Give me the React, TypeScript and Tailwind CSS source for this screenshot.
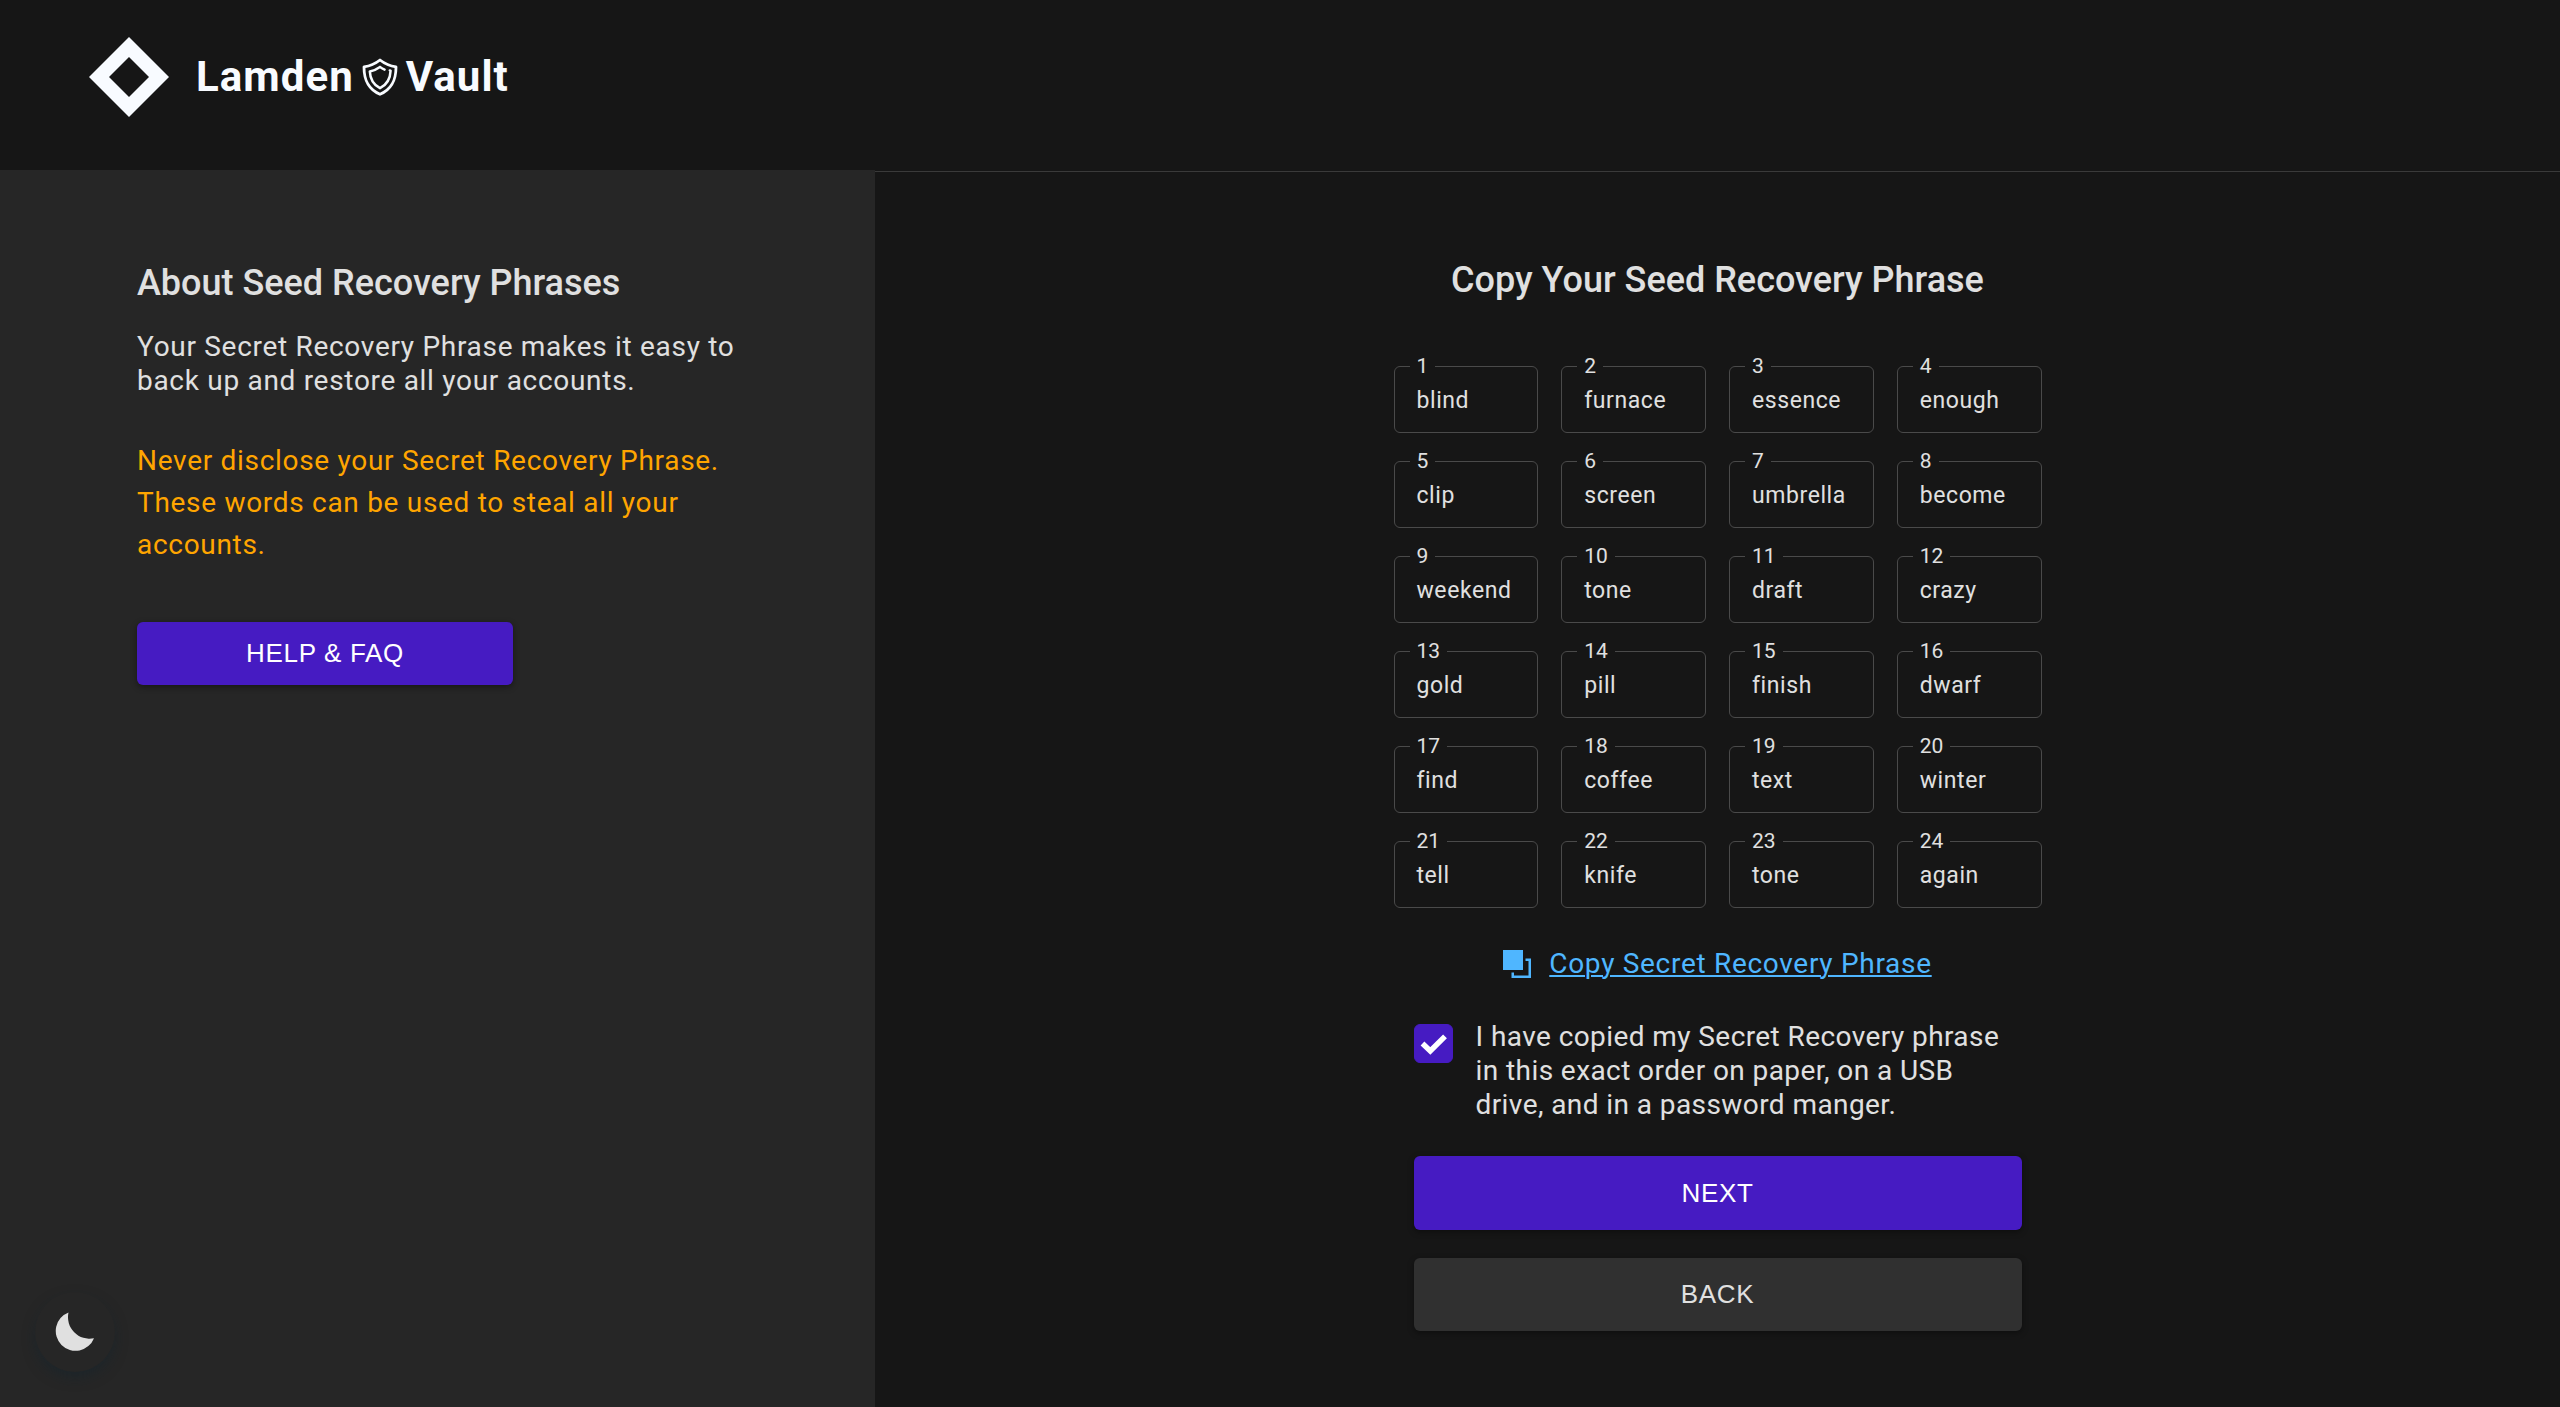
import { useState } from "react";

const WORDS = [
  "blind", "furnace", "essence", "enough",
  "clip", "screen", "umbrella", "become",
  "weekend", "tone", "draft", "crazy",
  "gold", "pill", "finish", "dwarf",
  "find", "coffee", "text", "winter",
  "tell", "knife", "tone", "again",
];

const BUTTON =
  "rounded-md font-['Liberation_Sans',sans-serif] text-[26px] tracking-wide uppercase shadow-[0_2px_6px_rgba(0,0,0,0.4)]";

function Header() {
  return (
    <header className="flex h-[170px] items-start px-[89px] pt-[37px] text-[#f8fbff]">
      <a href="#home" className="flex items-center" aria-label="Lamden Vault">
        <svg viewBox="0 0 80 80" className="size-20" fill="currentColor" aria-hidden="true">
          <path fillRule="evenodd" d="M40 0 80 40 40 80 0 40ZM40 20 20 40 40 60 60 40Z" />
        </svg>
        <span className="ml-[27px] text-[42px] leading-none font-bold tracking-wide">Lamden</span>
        <svg
          viewBox="0 0 36 38"
          className="mx-2 h-[38px] w-9"
          fill="none"
          stroke="currentColor"
          strokeLinecap="round"
          strokeLinejoin="round"
          aria-hidden="true"
        >
          <path
            strokeWidth="2.8"
            d="M18 2C13.200 5.800 8 8 2 8.900 2 22 6 31 18 36.300 30 31 34 22 34 8.900 28 8 22.800 5.800 18 2Z"
          />
          <path
            strokeWidth="2.5"
            d="M22.600 11.600C20.800 10.800 19.400 9.900 18 8.900 14.800 11.200 11.600 12.700 7.800 13.400 8.200 21.800 11.300 26.800 18 30.200 24.700 26.800 28.300 21 28.600 12.600L27.800 12.400"
          />
        </svg>
        <span className="text-[42px] leading-none font-bold tracking-wide">Vault</span>
      </a>
    </header>
  );
}

function InfoPanel() {
  return (
    <aside className="flex w-[34.18%] flex-col items-start bg-[#262626] px-[137px] pt-[92px] pb-[35px]">
      <h2 className="text-[36px] leading-[42px] font-medium">About Seed Recovery Phrases</h2>
      <p className="mt-[26px] text-[28px] leading-[34px] tracking-wide">
        Your Secret Recovery Phrase makes it easy to back up and restore all your accounts.
      </p>
      <p className="mt-[42px] text-[28px] leading-[42px] tracking-wide text-[#ffa500]">
        Never disclose your Secret Recovery Phrase. These words can be used to steal all your accounts.
      </p>
      <button type="button" className={`${BUTTON} mt-[56px] h-[63px] w-[376px] bg-[#461bc2] text-white`}>
        Help &amp; FAQ
      </button>
      <button
        type="button"
        aria-label="Toggle dark mode"
        className="mt-auto -ml-[102px] flex size-20 items-center justify-center rounded-full shadow-[0_6px_14px_-2px_rgba(16,36,48,0.5)]"
      >
        <svg viewBox="0 0 40 40" className="size-10" fill="currentColor" aria-hidden="true">
          <path d="M13.500 .5A19.800 19.800 0 1 0 39 26.200 21.500 21.500 0 0 1 13.500 .5Z" />
        </svg>
      </button>
    </aside>
  );
}

function SeedWord({ index, word }: { index: number; word: string }) {
  return (
    <li>
      <fieldset className="h-[79px] rounded-md border border-[#4a4a4a] pl-[22px]">
        <legend className="-ml-[7px] px-[7px] text-[21px] leading-6">{index}</legend>
        <p className="mt-[9px] text-[23px] leading-7 tracking-wide">{word}</p>
      </fieldset>
    </li>
  );
}

function SeedPanel() {
  const [copied, setCopied] = useState(true);
  return (
    <main className="mt-px flex flex-1 flex-col items-center border-t border-[#3a3a3a] pt-[87px]">
      <h1 className="text-[36px] leading-[42px] font-medium">Copy Your Seed Recovery Phrase</h1>
      <ol className="mt-[53px] grid w-[648px] grid-cols-4 gap-x-[23px] gap-y-4">
        {WORDS.map((word, i) => (
          <SeedWord key={i} index={i + 1} word={word} />
        ))}
      </ol>
      <a href="#copy" className="mt-[39px] flex items-center text-[#4fb6ff]">
        <svg viewBox="0 0 28 28" className="mr-[18px] size-7" fill="currentColor" aria-hidden="true">
          <path d="M0 0H20V20H0Z" />
          <path d="M22.500 8.500H28V28H8.500V22.500H11V25.500H25.500V11H22.500Z" />
        </svg>
        <span className="text-[28px] leading-[34px] tracking-wide underline decoration-2 underline-offset-2">
          Copy Secret Recovery Phrase
        </span>
      </a>
      <label className="mt-[39px] flex w-[608px] items-start">
        <span className="mt-1 grid size-[39px] shrink-0 rounded-md">
          <input
            type="checkbox"
            checked={copied}
            onChange={(e) => setCopied(e.target.checked)}
            className="peer col-start-1 row-start-1 size-full appearance-none rounded-md border border-[#461bc2] checked:bg-[#461bc2]"
          />
          <svg
            viewBox="0 0 39 39"
            className="pointer-events-none invisible col-start-1 row-start-1 size-full peer-checked:visible"
            fill="none"
            stroke="white"
            strokeWidth="5.4"
            aria-hidden="true"
          >
            <path d="M8.500 19.500 16.300 27 31 12.300" />
          </svg>
        </span>
        <span className="ml-[23px] text-[28px] leading-[34px] tracking-[0.015em]">
          I have copied my Secret Recovery phrase in this exact order on paper, on a USB drive, and in a password manger.
        </span>
      </label>
      <button type="button" className={`${BUTTON} mt-[34px] h-[74px] w-[608px] bg-[#461bc2] text-white`}>
        Next
      </button>
      <button type="button" className={`${BUTTON} mt-7 h-[73px] w-[608px] bg-[#303030]`}>
        Back
      </button>
    </main>
  );
}

export default function App() {
  return (
    <div className="flex min-h-screen flex-col bg-[#161616] font-[Roboto,sans-serif] text-[#e0e0e0]">
      <Header />
      <div className="flex flex-1">
        <InfoPanel />
        <SeedPanel />
      </div>
    </div>
  );
}
